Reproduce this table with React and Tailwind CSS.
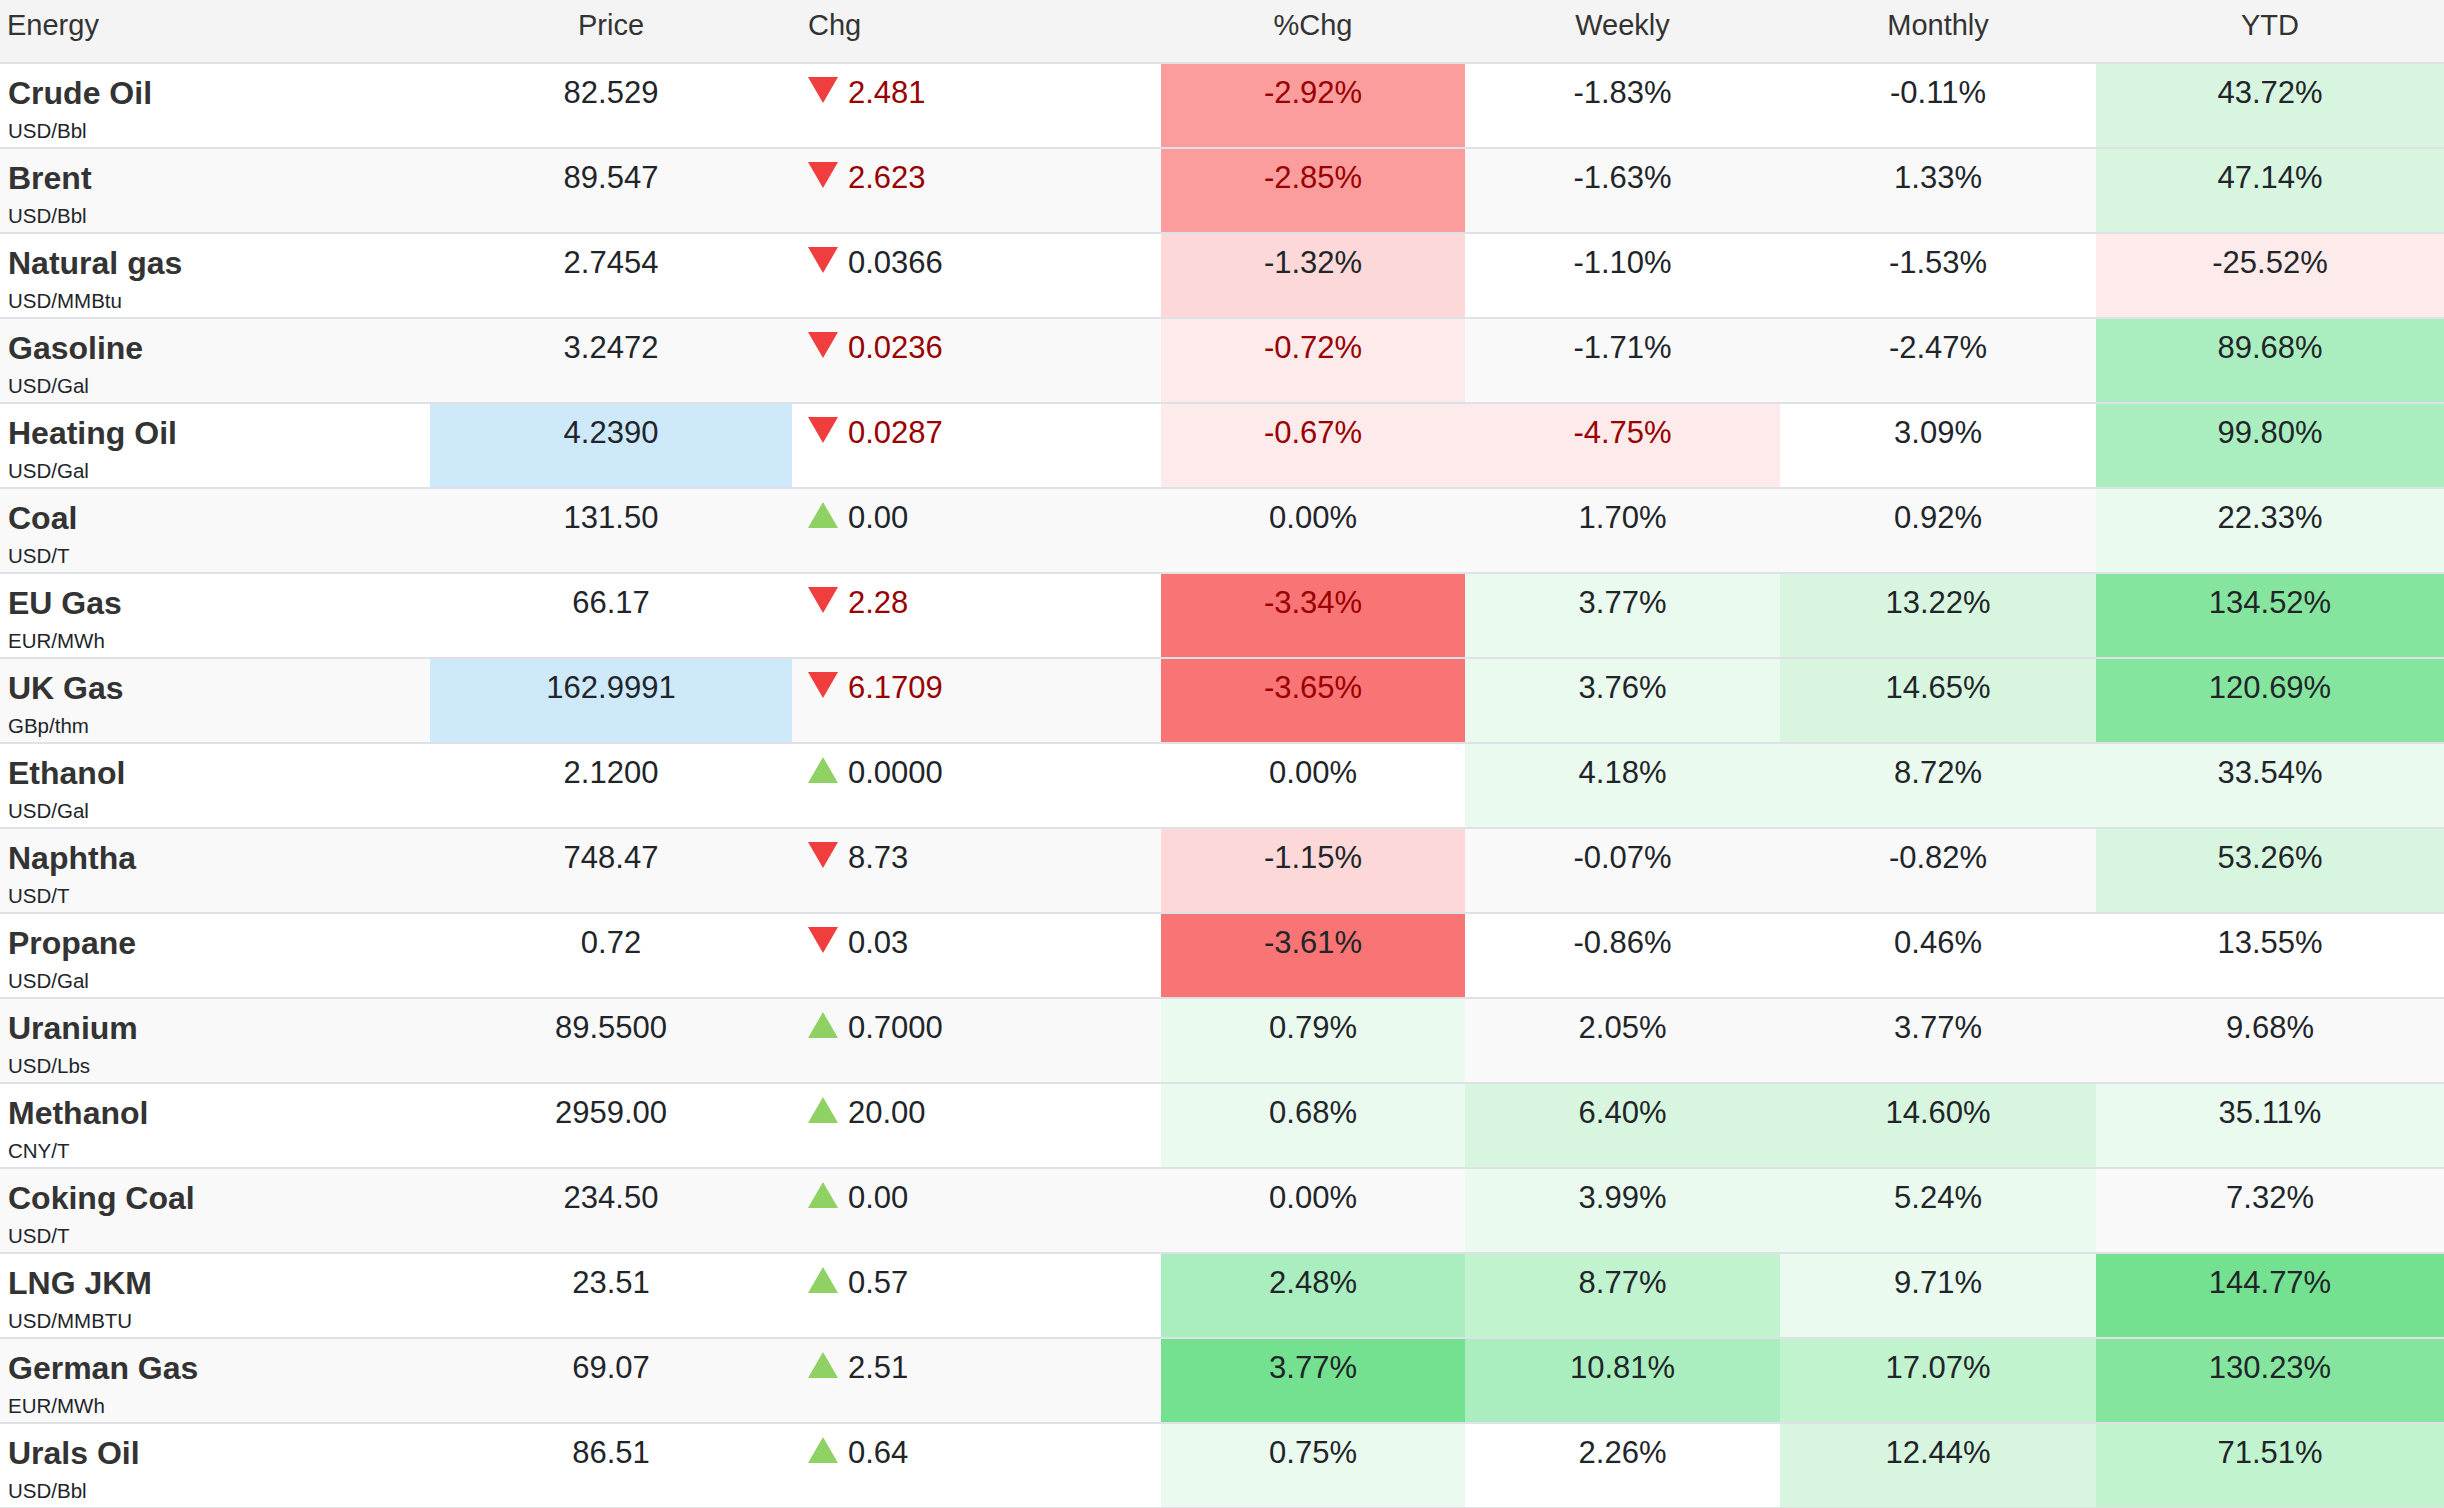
import React from "react";

// heatmap shades used by the cells
const BG = {
  none: "",
  r1: "bg-[#fdeaea]",
  r2: "bg-[#fdd8d8]",
  r3: "bg-[#fc9d9d]",
  r4: "bg-[#f97474]",
  g1: "bg-[#eafaee]",
  g2: "bg-[#d8f6df]",
  g3: "bg-[#c1f3cf]",
  g4: "bg-[#aaeebf]",
  g5: "bg-[#85e59f]",
  g6: "bg-[#73e190]",
};

const rows = [
  { name: "Crude Oil", unit: "USD/Bbl", price: "82.529", dir: "down", chg: "2.481", chgRed: true, pct: ["-2.92%", "r3", true], weekly: ["-1.83%", "none"], monthly: ["-0.11%", "none"], ytd: ["43.72%", "g2"] },
  { name: "Brent", unit: "USD/Bbl", price: "89.547", dir: "down", chg: "2.623", chgRed: true, pct: ["-2.85%", "r3", true], weekly: ["-1.63%", "none"], monthly: ["1.33%", "none"], ytd: ["47.14%", "g2"] },
  { name: "Natural gas", unit: "USD/MMBtu", price: "2.7454", dir: "down", chg: "0.0366", pct: ["-1.32%", "r2"], weekly: ["-1.10%", "none"], monthly: ["-1.53%", "none"], ytd: ["-25.52%", "r1"] },
  { name: "Gasoline", unit: "USD/Gal", price: "3.2472", dir: "down", chg: "0.0236", chgRed: true, pct: ["-0.72%", "r1", true], weekly: ["-1.71%", "none"], monthly: ["-2.47%", "none"], ytd: ["89.68%", "g4"] },
  { name: "Heating Oil", unit: "USD/Gal", price: "4.2390", priceHi: true, dir: "down", chg: "0.0287", chgRed: true, pct: ["-0.67%", "r1", true], weekly: ["-4.75%", "r1", true], monthly: ["3.09%", "none"], ytd: ["99.80%", "g4"] },
  { name: "Coal", unit: "USD/T", price: "131.50", dir: "up", chg: "0.00", pct: ["0.00%", "none"], weekly: ["1.70%", "none"], monthly: ["0.92%", "none"], ytd: ["22.33%", "g1"] },
  { name: "EU Gas", unit: "EUR/MWh", price: "66.17", dir: "down", chg: "2.28", chgRed: true, pct: ["-3.34%", "r4", true], weekly: ["3.77%", "g1"], monthly: ["13.22%", "g2"], ytd: ["134.52%", "g5"] },
  { name: "UK Gas", unit: "GBp/thm", price: "162.9991", priceHi: true, dir: "down", chg: "6.1709", chgRed: true, pct: ["-3.65%", "r4", true], weekly: ["3.76%", "g1"], monthly: ["14.65%", "g2"], ytd: ["120.69%", "g5"] },
  { name: "Ethanol", unit: "USD/Gal", price: "2.1200", dir: "up", chg: "0.0000", pct: ["0.00%", "none"], weekly: ["4.18%", "g1"], monthly: ["8.72%", "g1"], ytd: ["33.54%", "g1"] },
  { name: "Naphtha", unit: "USD/T", price: "748.47", dir: "down", chg: "8.73", pct: ["-1.15%", "r2"], weekly: ["-0.07%", "none"], monthly: ["-0.82%", "none"], ytd: ["53.26%", "g2"] },
  { name: "Propane", unit: "USD/Gal", price: "0.72", dir: "down", chg: "0.03", pct: ["-3.61%", "r4"], weekly: ["-0.86%", "none"], monthly: ["0.46%", "none"], ytd: ["13.55%", "none"] },
  { name: "Uranium", unit: "USD/Lbs", price: "89.5500", dir: "up", chg: "0.7000", pct: ["0.79%", "g1"], weekly: ["2.05%", "none"], monthly: ["3.77%", "none"], ytd: ["9.68%", "none"] },
  { name: "Methanol", unit: "CNY/T", price: "2959.00", dir: "up", chg: "20.00", pct: ["0.68%", "g1"], weekly: ["6.40%", "g2"], monthly: ["14.60%", "g2"], ytd: ["35.11%", "g1"] },
  { name: "Coking Coal", unit: "USD/T", price: "234.50", dir: "up", chg: "0.00", pct: ["0.00%", "none"], weekly: ["3.99%", "g1"], monthly: ["5.24%", "g1"], ytd: ["7.32%", "none"] },
  { name: "LNG JKM", unit: "USD/MMBTU", price: "23.51", dir: "up", chg: "0.57", pct: ["2.48%", "g4"], weekly: ["8.77%", "g3"], monthly: ["9.71%", "g1"], ytd: ["144.77%", "g6"] },
  { name: "German Gas", unit: "EUR/MWh", price: "69.07", dir: "up", chg: "2.51", pct: ["3.77%", "g6"], weekly: ["10.81%", "g4"], monthly: ["17.07%", "g3"], ytd: ["130.23%", "g5"] },
  { name: "Urals Oil", unit: "USD/Bbl", price: "86.51", dir: "up", chg: "0.64", pct: ["0.75%", "g1"], weekly: ["2.26%", "none"], monthly: ["12.44%", "g2"], ytd: ["71.51%", "g3"] },
];

const cols = "grid grid-cols-[430px_362px_369px_304px_315px_316px_348px]";

const Arrow = ({ dir }) =>
  dir === "down" ? (
    <svg width="30" height="26" viewBox="0 0 30 26" className="mt-[3px] shrink-0">
      <polygon points="0,0 30,0 15,26" fill="#f03d3d" />
    </svg>
  ) : (
    <svg width="30" height="26" viewBox="0 0 30 26" className="mt-[3px] shrink-0">
      <polygon points="15,0 30,26 0,26" fill="#8fd163" />
    </svg>
  );

const PctCell = ({ cell }) => {
  const [value, shade, red] = cell;
  return (
    <div className={`pt-[10px] text-center leading-[37px] ${BG[shade]} ${red ? "text-[#990000]" : "text-[#212529]"}`}>
      {value}
    </div>
  );
};

const Row = ({ row, index }) => (
  <div className={`${cols} h-[85px] border-b-2 border-[#dee2e6] ${index % 2 === 1 ? "bg-[#f9f9f9]" : "bg-white"}`}>
    <div className="pl-[8px] pt-[10px]">
      <div className="text-[32px] font-bold leading-[38px] text-[#333333]">{row.name}</div>
      <div className="mt-[7px] text-[20.5px] leading-[24px] text-[#212529]">{row.unit}</div>
    </div>
    <div className={`pt-[10px] text-center leading-[37px] text-[#212529] ${row.priceHi ? "bg-[#cde9fa]" : ""}`}>
      {row.price}
    </div>
    <div className="flex items-start gap-[10px] pl-[16px] pt-[10px]">
      <Arrow dir={row.dir} />
      <span className={`leading-[37px] ${row.chgRed ? "text-[#990000]" : "text-[#212529]"}`}>{row.chg}</span>
    </div>
    <PctCell cell={row.pct} />
    <PctCell cell={row.weekly} />
    <PctCell cell={row.monthly} />
    <PctCell cell={row.ytd} />
  </div>
);

export default function App() {
  return (
    <div className="w-[2444px] bg-white text-[31px] font-['Liberation_Sans',Arial,sans-serif]">
      <div className={`${cols} h-[64px] border-b-2 border-[#dee2e6] bg-[#f4f4f4] text-[29px] leading-[34px] text-[#333333]`}>
        <div className="pl-[7px] pt-[8px]">Energy</div>
        <div className="pt-[8px] text-center">Price</div>
        <div className="pl-[16px] pt-[8px]">Chg</div>
        <div className="pt-[8px] text-center">%Chg</div>
        <div className="pt-[8px] text-center">Weekly</div>
        <div className="pt-[8px] text-center">Monthly</div>
        <div className="pt-[8px] text-center">YTD</div>
      </div>
      {rows.map((row, i) => (
        <Row key={row.name} row={row} index={i} />
      ))}
    </div>
  );
}
